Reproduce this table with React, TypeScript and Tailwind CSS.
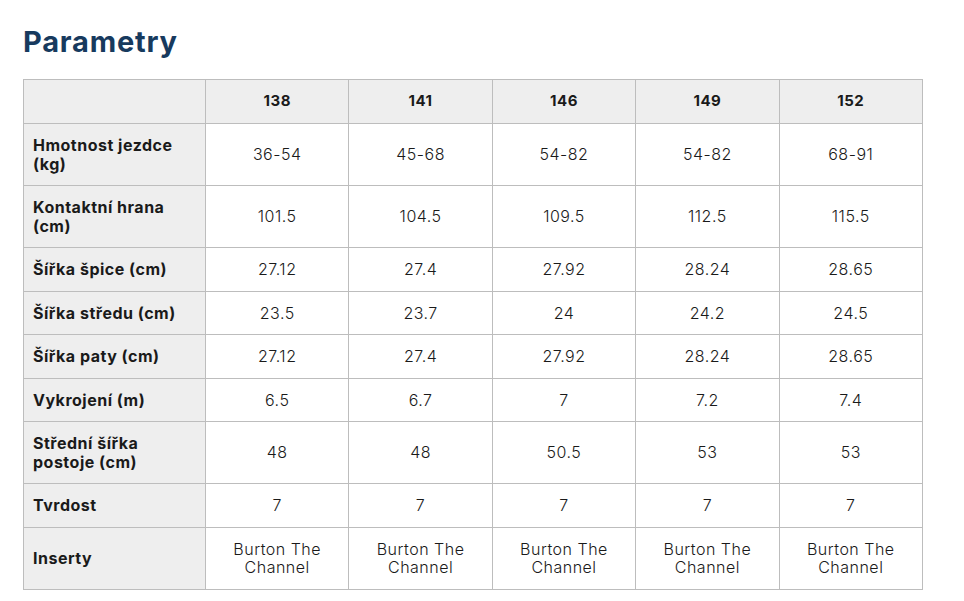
import React from 'react';

const sizes = ['138', '141', '146', '149', '152'];

const rows: { label: string; values: string[] }[] = [
  { label: 'Hmotnost jezdce (kg)', values: ['36-54', '45-68', '54-82', '54-82', '68-91'] },
  { label: 'Kontaktní hrana (cm)', values: ['101.5', '104.5', '109.5', '112.5', '115.5'] },
  { label: 'Šířka špice (cm)', values: ['27.12', '27.4', '27.92', '28.24', '28.65'] },
  { label: 'Šířka středu (cm)', values: ['23.5', '23.7', '24', '24.2', '24.5'] },
  { label: 'Šířka paty (cm)', values: ['27.12', '27.4', '27.92', '28.24', '28.65'] },
  { label: 'Vykrojení (m)', values: ['6.5', '6.7', '7', '7.2', '7.4'] },
  { label: 'Střední šířka postoje (cm)', values: ['48', '48', '50.5', '53', '53'] },
  { label: 'Tvrdost', values: ['7', '7', '7', '7', '7'] },
  { label: 'Inserty', values: ['Burton The Channel', 'Burton The Channel', 'Burton The Channel', 'Burton The Channel', 'Burton The Channel'] },
];

const App: React.FC = () => {
  return (
    <div className="min-h-screen bg-white px-[23px] pt-[24px] font-['Inter','Open_Sans',sans-serif] text-[#1a1a1a]">
      {/* Heading */}
      <h1 className="text-[29px] font-bold leading-[36px] tracking-[0.8px] text-[#173a5e]">Parametry</h1>

      <table className="mt-[19px] w-[900px] table-fixed border-collapse text-[16px] leading-[18.5px] tracking-[0.5px]">
        <colgroup>
          <col className="w-[182px]" />
          <col />
          <col />
          <col />
          <col />
          <col />
        </colgroup>
        <thead>
          <tr className="h-[44px] bg-[#eeeeee]">
            <th className="border border-[#bdbdbd]"></th>
            {sizes.map((s) => (
              <th key={s} className="border border-[#bdbdbd] text-center text-[15px] font-bold">
                {s}
              </th>
            ))}
          </tr>
        </thead>
        <tbody>
          {rows.map((r) => (
            <tr key={r.label}>
              <td className="border border-[#bdbdbd] bg-[#eeeeee] py-3 pl-[9px] pr-[20px] text-left font-bold">
                {r.label}
              </td>
              {r.values.map((v, i) => (
                <td key={i} className="border border-[#bdbdbd] px-6 py-3 text-center font-light">
                  {v}
                </td>
              ))}
            </tr>
          ))}
        </tbody>
      </table>
    </div>
  );
};

export default App;
